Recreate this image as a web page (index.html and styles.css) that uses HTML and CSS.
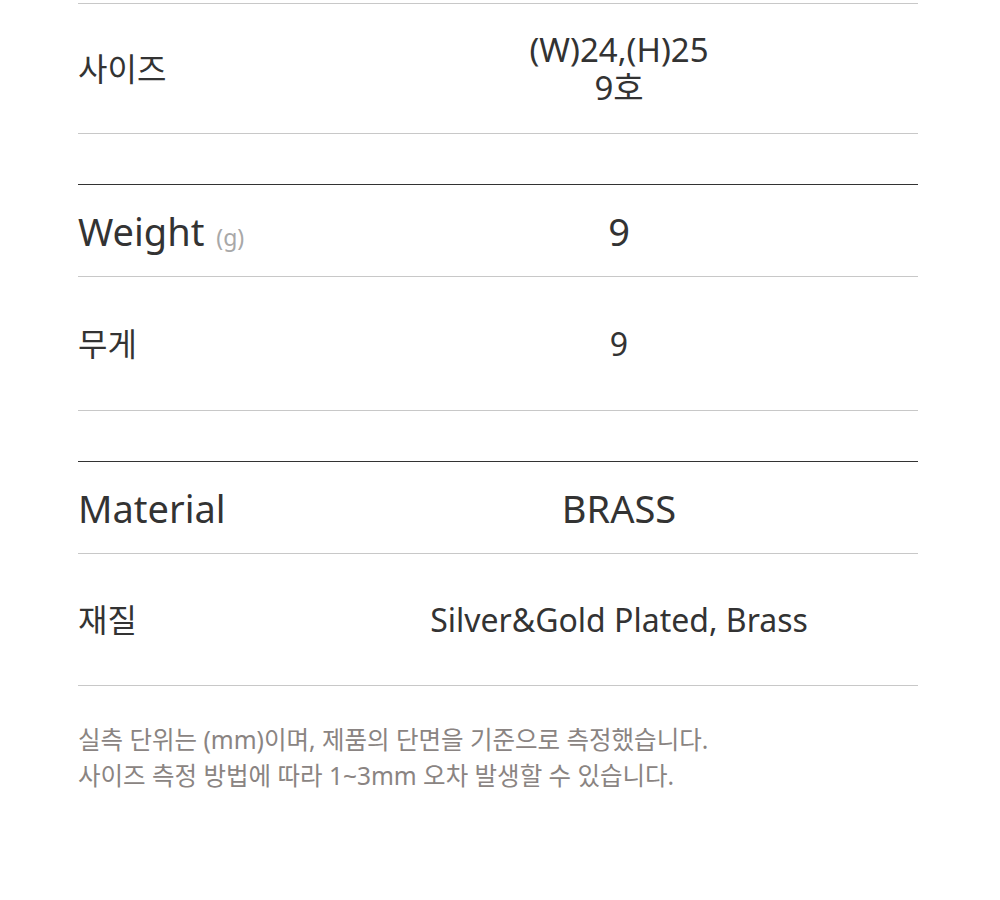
FILE: index.html
```html
<!DOCTYPE html>
<html lang="ko">
<head>
<meta charset="utf-8">
<link rel="stylesheet" href="styles.css">
</head>
<body>
<div class="spec">
  <section class="group">
    <div class="row detail">
      <div class="label">사이즈</div>
      <div class="value size"><span class="line">(W)24,(H)25</span><span class="line">9호</span></div>
    </div>
  </section>
  <section class="group">
    <div class="row head">
      <div class="label">Weight <span class="unit">(g)</span></div>
      <div class="value">9</div>
    </div>
    <div class="row detail tall">
      <div class="label">무게</div>
      <div class="value">9</div>
    </div>
  </section>
  <section class="group">
    <div class="row head">
      <div class="label">Material</div>
      <div class="value">BRASS</div>
    </div>
    <div class="row detail mid">
      <div class="label">재질</div>
      <div class="value">Silver&amp;Gold Plated, Brass</div>
    </div>
  </section>
  <p class="note"><span class="line">실측 단위는 (mm)이며, 제품의 단면을 기준으로 측정했습니다.</span><span class="line">사이즈 측정 방법에 따라 1~3mm 오차 발생할 수 있습니다.</span></p>
</div>
</body>
</html>
```

FILE: styles.css
```css
html, body {
  margin: 0;
  padding: 0;
  background: #fff;
}
body {
  font-family: "Noto Sans", "Noto Sans CJK KR", sans-serif;
  color: #333;
  padding-top: 3px;
}
.spec {
  width: 840px;
  margin-left: 78px;
}
.group {
  border-bottom: 1px solid #c8c8c8;
  margin-bottom: 50px;
}
.row {
  display: flex;
  align-items: center;
}
.label {
  width: 242px;
  flex: none;
}
.value {
  flex: 1;
  text-align: center;
}
.line {
  display: block;
}
.head {
  border-top: 1px solid #333;
  height: 91px;
  font-size: 38px;
  line-height: 1;
}
.unit {
  font-size: 23px;
  color: #a8a8a8;
  margin-left: 2px;
}
.detail {
  border-top: 1px solid #c8c8c8;
  height: 129px;
  font-size: 32px;
  line-height: 38px;
}
.detail.tall {
  height: 133px;
}
.detail.mid {
  height: 131px;
}
.detail .value {
  font-size: 32px;
}
.detail .value.size {
  font-size: 33px;
}
.note {
  margin: -14px 0 0;
  font-size: 24.5px;
  line-height: 36px;
  color: #8a8482;
}
```
